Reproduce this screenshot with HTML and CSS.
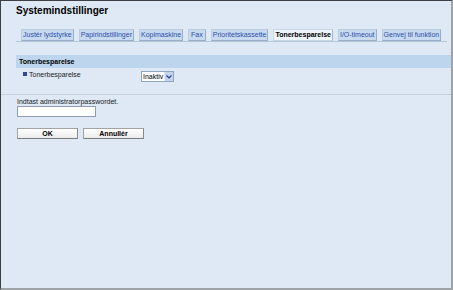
FILE: index.html
```html
<!DOCTYPE html>
<html lang="da">
<head>
<meta charset="utf-8">
<title>Systemindstillinger</title>
<link rel="stylesheet" href="styles.css">
</head>
<body>
<div class="frame">
  <h1 class="title">Systemindstillinger</h1>
  <div class="tabbar">
    <span class="tab">Justér lydstyrke</span>
    <span class="tab">Papirindstillinger</span>
    <span class="tab">Kopimaskine</span>
    <span class="tab tab-fax">Fax</span>
    <span class="tab">Prioritetskassette</span>
    <span class="tab active">Tonerbesparelse</span>
    <span class="tab">I/O-timeout</span>
    <span class="tab">Genvej til funktion</span>
  </div>
  <div class="section">Tonerbesparelse</div>
  <div class="row">
    <span class="bullet"></span>
    <span class="label">Tonerbesparelse</span>
    <span class="select">
      <span class="select-text">Inaktiv</span>
      <span class="select-btn"><svg width="6" height="4" viewBox="0 0 6 4"><path d="M0.5 0.5 L3 3 L5.5 0.5" fill="none" stroke="#2a3f8c" stroke-width="1.2"/></svg></span>
    </span>
  </div>
  <div class="sep"></div>
  <div class="pw-label">Indtast administratorpasswordet.</div>
  <div class="pw-input"></div>
  <div class="buttons">
    <span class="btn">OK</span>
    <span class="btn">Annullér</span>
  </div>
</div>
</body>
</html>
```
FILE: styles.css
```css
html, body {
  margin: 0;
  padding: 0;
}
body {
  font-family: "Liberation Sans", Arial, sans-serif;
  font-size: 7px;
  color: #000;
}
.frame {
  box-sizing: border-box;
  width: 453px;
  height: 290px;
  overflow: hidden;
  background: #dee9f5;
  border-top: 1px solid #3d3f42;
  border-left: 1px solid #3d3f42;
  border-right: 2px solid #9ea3a8;
  border-bottom: 2px solid #9ea3a8;
}
.title {
  margin: 0;
  padding: 4px 0 0 15px;
  font-size: 10px;
  line-height: 12px;
  font-weight: bold;
}
.tabbar {
  display: flex;
  gap: 5px;
  margin: 12px 4px 0 15px;
  padding-left: 5px;
  border-bottom: 1px solid #b3c5d9;
}
.tab {
  box-sizing: border-box;
  height: 12px;
  line-height: 10px;
  padding: 0 1px;
  background: #c7daf0;
  border: 1px solid #b9cde3;
  border-right-color: #98aec8;
  border-bottom-color: #98aec8;
  color: #2e4ea6;
  white-space: nowrap;
}
.tab-fax {
  padding: 0 2px;
}
.tab.active {
  background: #eef4fb;
  color: #000;
  font-weight: bold;
  border-color: #c9d6e4;
  border-right-color: #a5b5c8;
}
.section {
  margin: 13px 0 0 15px;
  height: 13px;
  line-height: 13px;
  padding-left: 3px;
  background: #bdd6ed;
  font-weight: bold;
}
.row {
  display: flex;
  align-items: flex-start;
  margin: 3px 0 0 22px;
  height: 11px;
}
.bullet {
  width: 4px;
  height: 4px;
  margin-top: 1px;
  background: #2b4a9a;
  flex: none;
}
.label {
  width: 112px;
  padding-left: 2px;
  line-height: 7px;
  color: #1a1a1a;
}
.select {
  box-sizing: border-box;
  display: flex;
  width: 33px;
  height: 11px;
  border: 1px solid #8fa4bd;
  background: #fff;
}
.select-text {
  flex: 1;
  padding-left: 1px;
  line-height: 9px;
}
.select-btn {
  display: flex;
  align-items: center;
  justify-content: center;
  width: 8px;
  background: #c3d3f0;
  border-left: 1px solid #e6edf8;
}
.sep {
  margin-top: 12px;
  border-top: 1px solid #c6d1dd;
}
.pw-label {
  margin: 3px 0 0 16px;
  line-height: 8px;
  color: #1a1a1a;
}
.pw-input {
  box-sizing: border-box;
  margin-left: 16px;
  width: 79px;
  height: 11px;
  background: #fff;
  border: 1px solid #8e9db0;
}
.buttons {
  display: flex;
  gap: 5px;
  margin: 11px 0 0 16px;
}
.btn {
  box-sizing: border-box;
  width: 61px;
  height: 11px;
  line-height: 9px;
  text-align: center;
  font-weight: bold;
  background: linear-gradient(#ffffff, #ebebeb);
  border: 1px solid #a3a3a3;
  border-bottom-color: #7d7d7d;
  border-right-color: #8a8a8a;
}
```
